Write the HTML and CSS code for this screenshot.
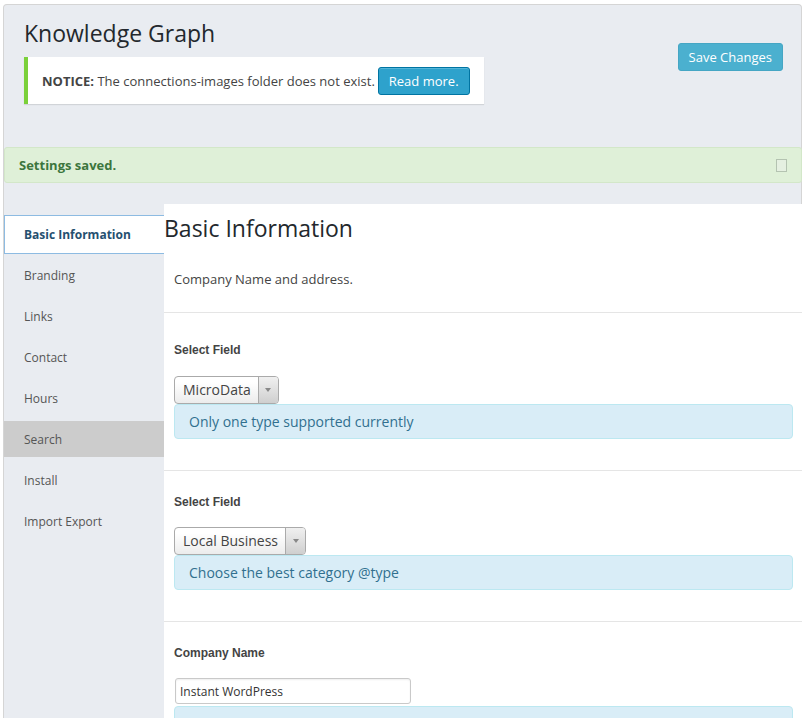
FILE: index.html
```html
<!DOCTYPE html>
<html lang="en">
<head>
<meta charset="utf-8">
<title>Knowledge Graph</title>
<link rel="stylesheet" href="styles.css">
</head>
<body>
<div class="panel">
  <header class="head">
    <div class="head-main">
      <h1 class="title">Knowledge Graph</h1>
      <div class="notice">
        <span class="notice-text"><strong>NOTICE:</strong> The connections-images folder does not exist.</span>
        <a class="btn btn-read" href="#">Read more.</a>
      </div>
    </div>
    <button class="btn btn-save" type="button">Save Changes</button>
  </header>

  <div class="saved">
    <span>Settings saved.</span>
    <span class="dismiss"></span>
  </div>

  <div class="layout">
    <nav class="tabs">
      <a class="tab tab-active" href="#">Basic Information</a>
      <a class="tab" href="#">Branding</a>
      <a class="tab" href="#">Links</a>
      <a class="tab" href="#">Contact</a>
      <a class="tab" href="#">Hours</a>
      <a class="tab tab-hover" href="#">Search</a>
      <a class="tab" href="#">Install</a>
      <a class="tab" href="#">Import Export</a>
    </nav>

    <main class="content">
      <h2 class="content-title">Basic Information</h2>
      <p class="desc">Company Name and address.</p>

      <section class="field field-first">
        <label class="field-label">Select Field</label>
        <div class="select"><span class="select-value">MicroData</span><span class="select-arrow"><i class="caret"></i></span></div>
        <div class="hint">Only one type supported currently</div>
      </section>

      <section class="field">
        <label class="field-label">Select Field</label>
        <div class="select"><span class="select-value">Local Business</span><span class="select-arrow"><i class="caret"></i></span></div>
        <div class="hint">Choose the best category @type</div>
      </section>

      <section class="field">
        <label class="field-label" for="company">Company Name</label>
        <input class="input" id="company" type="text" value="Instant WordPress">
        <div class="hint hint-input"></div>
      </section>
    </main>
  </div>
</div>
</body>
</html>
```

FILE: styles.css
```css
html { background: #fff; }
body {
  margin: 0;
  font-family: "Open Sans", "DejaVu Sans", sans-serif;
  color: #444;
}

.panel {
  margin: 4px 0 0 3px;
  min-height: 714px;
  box-sizing: border-box;
  border: 1px solid #d5d5d5;
  border-bottom: 0;
  border-radius: 4px 4px 0 0;
  background: #e9ecf1;
}

/* header */
.head {
  display: flex;
  justify-content: space-between;
  align-items: flex-start;
  padding: 12px 18px 0 20px;
}
.title {
  margin: 0;
  font-size: 23px;
  font-weight: 400;
  line-height: 32px;
  color: #23282d;
}
.notice {
  display: flex;
  align-items: center;
  width: max-content;
  margin-top: 8px;
  padding: 10px 14px 9px;
  background: #fff;
  border-left: 4px solid #7ad03a;
  box-shadow: 0 1px 1px rgba(0, 0, 0, 0.1);
  font-size: 13px;
  line-height: 20px;
  color: #444;
}
.notice strong { font-weight: 700; }

.btn {
  display: inline-block;
  height: 28px;
  box-sizing: border-box;
  padding: 0 10px;
  border-radius: 3px;
  font-family: "Open Sans", sans-serif;
  font-size: 13px;
  line-height: 26px;
  color: #fff;
  text-decoration: none;
  cursor: pointer;
}
.btn-read {
  margin-left: 3px;
  background: #2ea2cc;
  border: 1px solid #0074a2;
  box-shadow: inset 0 1px 0 rgba(120, 200, 230, 0.5);
}
.btn-save {
  margin-top: 26px;
  padding: 0 10px;
  background: #4bb0cf;
  border: 1px solid #45a6c4;
}

/* settings saved */
.saved {
  display: flex;
  justify-content: space-between;
  align-items: center;
  margin: 43px -1px 0 0;
  padding: 7px 14px 7px 14px;
  background: #dff0d8;
  border: 1px solid #d3e7c9;
  border-radius: 3px;
  font-size: 13px;
  font-weight: 700;
  line-height: 20px;
  color: #3c763d;
}
.dismiss {
  width: 11px;
  height: 13px;
  box-sizing: border-box;
  border: 1px solid #b4c3b1;
  background: #e5f0e1;
}

/* layout */
.layout {
  display: flex;
  align-items: stretch;
  margin: 21px -1px 0 0;
}
.tabs {
  flex: none;
  width: 160px;
  padding-top: 11px;
}
.tab {
  display: block;
  height: 36px;
  box-sizing: border-box;
  margin-bottom: 5px;
  padding: 1px 0 0 20px;
  font-size: 12px;
  line-height: 35px;
  color: #555;
  text-decoration: none;
}
.tab-active {
  height: 39px;
  margin-bottom: 3px;
  padding: 0 0 0 19px;
  line-height: 37px;
  background: #fff;
  border: 1px solid #8dbbe2;
  border-right: 0;
  font-weight: 700;
  color: #25506f;
}
.tab-hover { background: #ccc; }

.content {
  flex: 1;
  min-width: 0;
  background: #fff;
  min-height: 520px;
}
.content-title {
  margin: 8px 0 0;
  font-size: 23px;
  font-weight: 400;
  line-height: 32px;
  color: #23282d;
}
.desc {
  margin: 26px 0 0;
  padding: 0 10px 24px;
  font-size: 13px;
  line-height: 18px;
  color: #444;
}

.field {
  border-top: 1px solid #e5e5e5;
  padding: 23px 9px 31px 10px;
}
.field-first { padding-top: 29px; }
.field-label {
  display: block;
  margin-bottom: 17px;
  font-family: "Liberation Sans", Arial, sans-serif;
  font-size: 12px;
  font-weight: 700;
  line-height: 16px;
  color: #444;
}
.field-first .field-label { margin-bottom: 18px; }

.select {
  display: flex;
  width: max-content;
  height: 28px;
  box-sizing: border-box;
  border: 1px solid #aaa;
  border-radius: 4px;
  overflow: hidden;
  background: linear-gradient(#fff 20%, #ececec);
  font-size: 14px;
  line-height: 26px;
  color: #444;
}
.select-value { padding: 0 7px 0 8px; }
.select-arrow {
  display: flex;
  align-items: center;
  justify-content: center;
  width: 19px;
  border-left: 1px solid #aaa;
  background: linear-gradient(#f0f0f0, #cfcfcf);
}
.caret {
  width: 0;
  height: 0;
  border-left: 3px solid transparent;
  border-right: 3px solid transparent;
  border-top: 4px solid #888;
}

.hint {
  padding: 7px 14px 6px;
  background: #d9edf7;
  border: 1px solid #bce8f1;
  border-radius: 4px;
  font-size: 14px;
  line-height: 20px;
  color: #31708f;
}
.hint-input {
  margin-top: 2px;
  min-height: 35px;
  box-sizing: border-box;
}

.input {
  display: block;
  width: 236px;
  height: 26px;
  box-sizing: border-box;
  margin: 1px 0 0 1px;
  padding: 0 4px;
  border: 1px solid #c9c9c9;
  border-radius: 3px;
  box-shadow: inset 0 1px 2px rgba(0, 0, 0, 0.07);
  font-family: "Open Sans", sans-serif;
  font-size: 12px;
  color: #333;
}
```
